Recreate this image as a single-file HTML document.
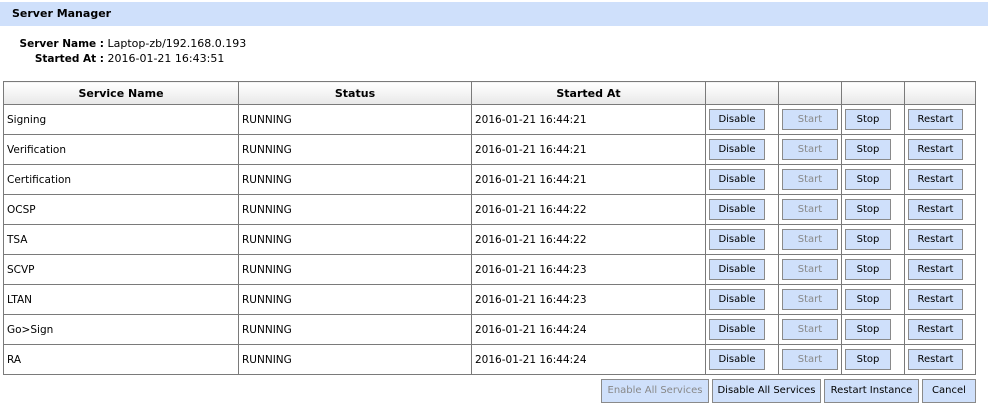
<!DOCTYPE html>
<html><head><style>
body{margin:0;width:988px;height:415px;background:#fff;font-family:Tahoma,"DejaVu Sans","Liberation Sans",sans-serif;font-size:10.5px;color:#000;position:relative;overflow:hidden}
.hdr{position:absolute;left:0;top:2px;width:988px;height:24px;background:#cfe0fb;font-weight:bold;font-size:11px;line-height:24px;padding-left:12px;box-sizing:border-box}
.info{position:absolute;left:0;font-size:11px}
.info b{display:inline-block;width:104px;text-align:right;font-size:10.5px}
table{position:absolute;left:3px;top:81px;border-collapse:collapse;table-layout:fixed;width:972px}
td,th{border:1px solid #7a7a7a;padding:0 3px;height:29px;white-space:nowrap;overflow:hidden}
th{height:22px;background:linear-gradient(#fff,#e8e8e8);font-size:11px}
td.b{text-align:left;padding:0 0 0 3px}
.btn{display:inline-block;box-sizing:border-box;height:21px;line-height:19px;background:#cfe0fb;border:1px solid #8a8a8a;text-align:center;font-size:10px;vertical-align:middle}
.dis{color:#888}
.bot{position:absolute;top:379px;height:24px;line-height:22px}
</style></head><body>
<div class="hdr">Server Manager</div>
<div class="info" style="top:37px"><b>Server Name :</b> Laptop-zb/192.168.0.193</div>
<div class="info" style="top:52px"><b>Started At :</b> 2016-01-21 16:43:51</div>
<table>
<colgroup><col style="width:235px"><col style="width:233px"><col style="width:234px"><col style="width:73px"><col style="width:63px"><col style="width:63px"><col style="width:71px"></colgroup>
<tr><th>Service Name</th><th>Status</th><th>Started At</th><th></th><th></th><th></th><th></th></tr>
<tr><td>Signing</td><td>RUNNING</td><td>2016-01-21 16:44:21</td><td class="b"><span class="btn" style="width:56px">Disable</span></td><td class="b"><span class="btn dis" style="width:56px">Start</span></td><td class="b"><span class="btn" style="width:46px">Stop</span></td><td class="b"><span class="btn" style="width:55px">Restart</span></td></tr>
<tr><td>Verification</td><td>RUNNING</td><td>2016-01-21 16:44:21</td><td class="b"><span class="btn" style="width:56px">Disable</span></td><td class="b"><span class="btn dis" style="width:56px">Start</span></td><td class="b"><span class="btn" style="width:46px">Stop</span></td><td class="b"><span class="btn" style="width:55px">Restart</span></td></tr>
<tr><td>Certification</td><td>RUNNING</td><td>2016-01-21 16:44:21</td><td class="b"><span class="btn" style="width:56px">Disable</span></td><td class="b"><span class="btn dis" style="width:56px">Start</span></td><td class="b"><span class="btn" style="width:46px">Stop</span></td><td class="b"><span class="btn" style="width:55px">Restart</span></td></tr>
<tr><td>OCSP</td><td>RUNNING</td><td>2016-01-21 16:44:22</td><td class="b"><span class="btn" style="width:56px">Disable</span></td><td class="b"><span class="btn dis" style="width:56px">Start</span></td><td class="b"><span class="btn" style="width:46px">Stop</span></td><td class="b"><span class="btn" style="width:55px">Restart</span></td></tr>
<tr><td>TSA</td><td>RUNNING</td><td>2016-01-21 16:44:22</td><td class="b"><span class="btn" style="width:56px">Disable</span></td><td class="b"><span class="btn dis" style="width:56px">Start</span></td><td class="b"><span class="btn" style="width:46px">Stop</span></td><td class="b"><span class="btn" style="width:55px">Restart</span></td></tr>
<tr><td>SCVP</td><td>RUNNING</td><td>2016-01-21 16:44:23</td><td class="b"><span class="btn" style="width:56px">Disable</span></td><td class="b"><span class="btn dis" style="width:56px">Start</span></td><td class="b"><span class="btn" style="width:46px">Stop</span></td><td class="b"><span class="btn" style="width:55px">Restart</span></td></tr>
<tr><td>LTAN</td><td>RUNNING</td><td>2016-01-21 16:44:23</td><td class="b"><span class="btn" style="width:56px">Disable</span></td><td class="b"><span class="btn dis" style="width:56px">Start</span></td><td class="b"><span class="btn" style="width:46px">Stop</span></td><td class="b"><span class="btn" style="width:55px">Restart</span></td></tr>
<tr><td>Go&gt;Sign</td><td>RUNNING</td><td>2016-01-21 16:44:24</td><td class="b"><span class="btn" style="width:56px">Disable</span></td><td class="b"><span class="btn dis" style="width:56px">Start</span></td><td class="b"><span class="btn" style="width:46px">Stop</span></td><td class="b"><span class="btn" style="width:55px">Restart</span></td></tr>
<tr><td>RA</td><td>RUNNING</td><td>2016-01-21 16:44:24</td><td class="b"><span class="btn" style="width:56px">Disable</span></td><td class="b"><span class="btn dis" style="width:56px">Start</span></td><td class="b"><span class="btn" style="width:46px">Stop</span></td><td class="b"><span class="btn" style="width:55px">Restart</span></td></tr>
</table>
<span class="btn dis bot" style="left:601px;width:108px">Enable All Services</span>
<span class="btn bot" style="left:712px;width:109px">Disable All Services</span>
<span class="btn bot" style="left:824px;width:95px">Restart Instance</span>
<span class="btn bot" style="left:922px;width:54px">Cancel</span>
</body></html>
